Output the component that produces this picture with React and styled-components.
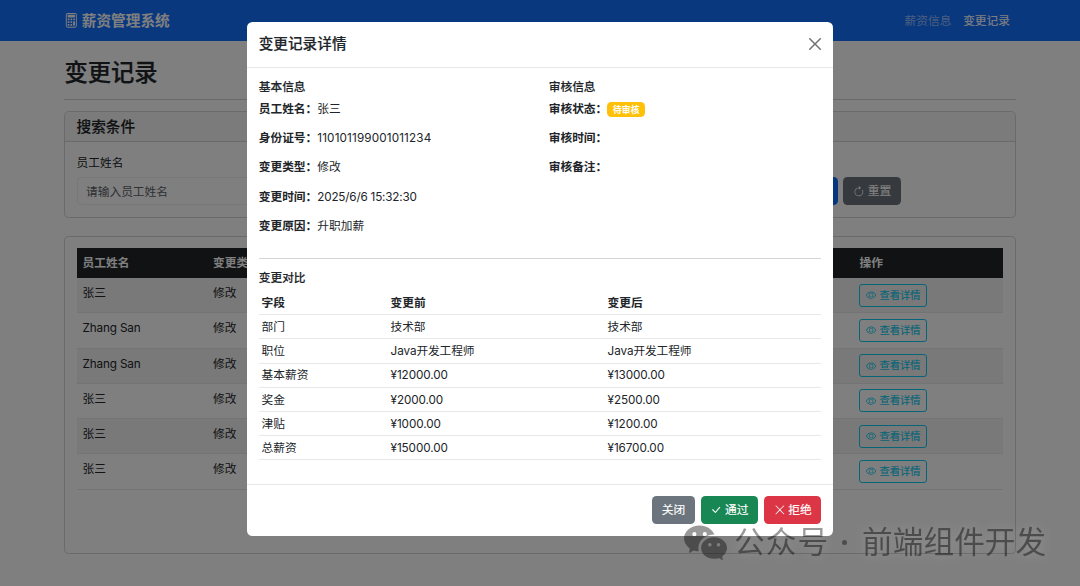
import React from "react";
import styled, { createGlobalStyle } from "styled-components";
import {
  BsArrowClockwise,
  BsCalculator,
  BsCheckLg,
  BsEye,
  BsWechat,
  BsXLg,
} from "react-icons/bs";

const records = [
  { name: "张三", type: "修改" },
  { name: "Zhang San", type: "修改" },
  { name: "Zhang San", type: "修改" },
  { name: "张三", type: "修改" },
  { name: "张三", type: "修改" },
  { name: "张三", type: "修改" },
];

const basicInfo = [
  { label: "员工姓名", value: "张三" },
  { label: "身份证号", value: "110101199001011234", tracking: "0.14px" },
  { label: "变更类型", value: "修改" },
  { label: "变更时间", value: "2025/6/6 15:32:30", tracking: "-0.2px" },
  { label: "变更原因", value: "升职加薪" },
];

const changes = [
  ["部门", "技术部", "技术部"],
  ["职位", "Java开发工程师", "Java开发工程师"],
  ["基本薪资", "¥12000.00", "¥13000.00"],
  ["奖金", "¥2000.00", "¥2500.00"],
  ["津贴", "¥1000.00", "¥1200.00"],
  ["总薪资", "¥15000.00", "¥16700.00"],
];

const App = () => {
  return (
    <>
      <GlobalStyle />
      <Page>
        <Navbar>
          <Brand>
            <BsCalculator />
            薪资管理系统
          </Brand>
          <NavLinks>
            <NavLink>薪资信息</NavLink>
            <NavLink $active>变更记录</NavLink>
          </NavLinks>
        </Navbar>

        <Container>
          <PageTitle>变更记录</PageTitle>
          <Card>
            <CardHeader>搜索条件</CardHeader>
            <SearchForm>
              <Field>
                <Label>员工姓名</Label>
                <TextInput placeholder="请输入员工姓名" />
              </Field>
              <SearchActions>
                <Button $color="#0d6efd">
                  <span>搜索</span>
                </Button>
                <Button $color="#6c757d">
                  <BsArrowClockwise />
                  <span>重置</span>
                </Button>
              </SearchActions>
            </SearchForm>
          </Card>

          <TableCard>
            <RecordTable>
              <thead>
                <tr>
                  <th>员工姓名</th>
                  <th>变更类型</th>
                  <th>操作</th>
                </tr>
              </thead>
              <tbody>
                {records.map((record, i) => (
                  <tr key={i}>
                    <td>{record.name}</td>
                    <td>{record.type}</td>
                    <td>
                      <DetailButton>
                        <BsEye />
                        查看详情
                      </DetailButton>
                    </td>
                  </tr>
                ))}
              </tbody>
            </RecordTable>
          </TableCard>
        </Container>
      </Page>

      <Backdrop>
        <Modal>
          <ModalHeader>
            <ModalTitle>变更记录详情</ModalTitle>
            <CloseButton aria-label="Close">
              <svg viewBox="0 0 16 16" fill="#000">
                <path d="M.293.293a1 1 0 0 1 1.414 0L8 6.586 14.293.293a1 1 0 1 1 1.414 1.414L9.414 8l6.293 6.293a1 1 0 0 1-1.414 1.414L8 9.414l-6.293 6.293a1 1 0 0 1-1.414-1.414L6.586 8 .293 1.707a1 1 0 0 1 0-1.414z" />
              </svg>
            </CloseButton>
          </ModalHeader>
          <ModalBody>
            <InfoGrid>
              <div>
                <SectionTitle>基本信息</SectionTitle>
                {basicInfo.map((item) => (
                  <InfoRow key={item.label}>
                    <strong>{item.label}：</strong>
                    <Value $tracking={item.tracking}>{item.value}</Value>
                  </InfoRow>
                ))}
              </div>
              <div>
                <SectionTitle>审核信息</SectionTitle>
                <InfoRow>
                  <strong>审核状态：</strong>
                  <Badge>待审核</Badge>
                </InfoRow>
                <InfoRow>
                  <strong>审核时间：</strong>
                </InfoRow>
                <InfoRow>
                  <strong>审核备注：</strong>
                </InfoRow>
              </div>
            </InfoGrid>
            <Divider />
            <SectionTitle>变更对比</SectionTitle>
            <CompareTable>
              <thead>
                <tr>
                  <th>字段</th>
                  <th>变更前</th>
                  <th>变更后</th>
                </tr>
              </thead>
              <tbody>
                {changes.map(([field, before, after]) => (
                  <tr key={field}>
                    <td>{field}</td>
                    <td>{before}</td>
                    <td>{after}</td>
                  </tr>
                ))}
              </tbody>
            </CompareTable>
          </ModalBody>
          <ModalFooter>
            <Button $color="#6c757d">
              <span>关闭</span>
            </Button>
            <Button $color="#198754">
              <BsCheckLg />
              <span>通过</span>
            </Button>
            <Button $color="#dc3545">
              <BsXLg />
              <span>拒绝</span>
            </Button>
          </ModalFooter>
        </Modal>
      </Backdrop>

      <Watermark>
        <BsWechat />
        <span>公众号</span>
        <Dot />
        <span>前端组件开发</span>
      </Watermark>
    </>
  );
};

const GlobalStyle = createGlobalStyle`
  * {
    box-sizing: border-box;
  }
  body {
    margin: 0;
    height: 586px;
    overflow: hidden;
    background: #fff;
    color: #212529;
    font-family: Inter, "Noto Sans CJK SC", sans-serif;
    font-size: 11.72px;
    line-height: 17.58px;
  }
  h2, h5, h6, p {
    margin: 0;
    font-weight: 500;
  }
  h2, h5, h6 {
    -webkit-text-stroke: 0.15px currentColor;
  }
  button, input {
    font-family: inherit;
  }
`;

const Page = styled.div`
  height: 586px;
  overflow: hidden;
`;

const Navbar = styled.nav`
  height: 41px;
  padding: 2px 70px 0 64.5px;
  display: flex;
  align-items: center;
  justify-content: space-between;
  background: #1470ff;
`;

const Brand = styled.div`
  display: flex;
  align-items: center;
  gap: 3.5px;
  color: #fff;
  font-size: 14.65px;
  font-weight: 600;

  svg {
    margin-left: -0.8px;
    margin-top: -2px;
  }
`;

const NavLinks = styled.div`
  display: flex;
  gap: 11.72px;
`;

const NavLink = styled.a`
  color: ${(props) => (props.$active ? "#fff" : "rgba(255, 255, 255, 0.55)")};
  -webkit-text-stroke: ${(props) => (props.$active ? "0.12px" : "0")} #fff;
`;

const Container = styled.main`
  padding: 17.6px 64.4px 0;
`;

const PageTitle = styled.h2`
  height: 41px;
  margin-bottom: 11.7px;
  border-bottom: 1px solid #d4d4d5;
  font-size: 23.3px;
  line-height: 28px;
  -webkit-text-stroke-width: 0.25px;
`;

const Card = styled.section`
  border: 1px solid #d5d5d5;
  border-radius: 4.4px;
`;

const CardHeader = styled.h5`
  height: 30px;
  padding: 7px 11.2px 0;
  background: #f7f7f7;
  border-bottom: 1px solid #d5d5d5;
  border-radius: 4px 4px 0 0;
  font-size: 14.65px;
`;

const SearchForm = styled.div`
  padding: 12.7px 11.2px 11.7px;
  display: flex;
  align-items: flex-end;
`;

const Field = styled.div`
  width: 231px;
  margin-right: 479.3px;
`;

const Label = styled.label`
  display: block;
  margin-bottom: 4.9px;
`;

const TextInput = styled.input`
  display: block;
  width: 100%;
  height: 28px;
  padding: 1px 8.4px 0;
  border: 1px solid #eceeef;
  border-radius: 4.4px;
  font-size: 11.72px;
  &::placeholder {
    color: #5c6166;
    opacity: 1;
  }
`;

const SearchActions = styled.div`
  display: flex;
  gap: 5.9px;
  margin-left: 8px;
`;

const Button = styled.button`
  height: 28px;
  padding: 0 9.6px;
  display: flex;
  align-items: center;
  gap: 3px;
  border: 0;
  border-radius: 4.4px;
  background: ${(props) => props.$color};
  color: #fff;
  font-size: 11.72px;
  line-height: 17.58px;

  span {
    padding-top: 1px;
    -webkit-text-stroke: 0.15px #fff;
  }
`;

const TableCard = styled(Card)`
  height: 317.5px;
  margin-top: 18px;
  padding: 11px 11.2px;
`;

const RecordTable = styled.table`
  width: 100%;
  table-layout: fixed;
  border-collapse: separate;
  border-spacing: 0;

  th, td {
    padding: 7px 6px 0;
    text-align: left;
    vertical-align: top;
  }
  th {
    height: 30px;
    background: #212529;
    color: #fff;
    font-weight: 700;
  }
  th:first-child {
    width: 130.4px;
  }
  th:last-child {
    width: 150px;
  }
  td {
    height: 35.25px;
    border-bottom: 1px solid #e6e8ea;
  }
  td:first-child {
    letter-spacing: -0.15px;
  }
  td:last-child {
    padding-top: 5.5px;
  }
  tbody tr:nth-child(odd) td {
    background: #f2f2f2;
  }
`;

const DetailButton = styled.button`
  height: 23px;
  padding: 0 5.8px;
  display: flex;
  align-items: center;
  gap: 3px;
  background: none;
  border: 1px solid #0dcaf0;
  border-radius: 3px;
  color: #0dcaf0;
  font-size: 10.25px;
  line-height: 15px;
  -webkit-text-stroke: 0.15px #0dcaf0;

  svg {
    stroke-width: 0;
  }
`;

const Backdrop = styled.div`
  position: fixed;
  inset: 0;
  padding-top: 21.5px;
  background: rgba(0, 0, 0, 0.5);
`;

const Modal = styled.div`
  width: 586px;
  height: 514px;
  margin: 0 auto;
  display: flex;
  flex-direction: column;
  background: #fff;
  border-radius: 5.5px;
`;

const ModalHeader = styled.header`
  height: 46px;
  padding: 0 11.7px;
  display: flex;
  align-items: center;
  justify-content: space-between;
  border-bottom: 1px solid #e6e8ea;
`;

const ModalTitle = styled.h5`
  font-size: 14.65px;
  line-height: 22px;
`;

const CloseButton = styled.button`
  padding: 0;
  border: 0;
  background: none;
  opacity: 0.55;

  svg {
    display: block;
    width: 12px;
    height: 12px;
  }
`;

const ModalBody = styled.div`
  flex: 1;
  padding: 12.7px 11.7px 0;
`;

const InfoGrid = styled.div`
  display: grid;
  grid-template-columns: 290px 1fr;
`;

const SectionTitle = styled.h6`
  margin-bottom: 6.4px;
  font-size: 11.72px;
  line-height: 14.06px;
`;

const InfoRow = styled.p`
  height: 17.58px;
  margin-bottom: 11.8px;
  display: flex;
  align-items: center;
  font-weight: 400;

  strong {
    font-weight: 700;
  }
`;

const Value = styled.span`
  letter-spacing: ${(props) => props.$tracking || "normal"};
`;

const Badge = styled.span`
  height: 15.5px;
  padding: 0 5.8px;
  display: flex;
  align-items: center;
  background: #ffc107;
  border-radius: 4.4px;
  color: #fff;
  font-size: 8.79px;
  font-weight: 700;
`;

const Divider = styled.div`
  height: 1px;
  margin: 10.6px 0 11.4px;
  background: #d3d4d5;
`;

const CompareTable = styled.table`
  width: 100%;
  table-layout: fixed;
  border-collapse: separate;
  border-spacing: 0;

  th, td {
    height: 24.2px;
    padding: 3.9px 2.9px 1.7px;
    border-bottom: 1px solid #e6e8ea;
    text-align: left;
  }
  th {
    font-weight: 700;
  }
  th:first-child {
    width: 129px;
  }
  th:nth-child(2) {
    width: 217px;
  }
  td:not(:first-child) {
    letter-spacing: -0.1px;
  }
`;

const ModalFooter = styled.footer`
  height: 52px;
  padding: 0 11.7px;
  display: flex;
  align-items: center;
  justify-content: flex-end;
  gap: 5.9px;
  border-top: 1px solid #e6e8ea;
`;

const Watermark = styled.div`
  position: fixed;
  left: 684px;
  top: 519px;
  height: 46px;
  display: flex;
  align-items: center;
  color: #000;
  opacity: 0.4;
  font-size: 30.7px;
  font-weight: 400;
  line-height: 46px;
  white-space: nowrap;
  text-shadow: 0 0 12px rgba(255, 255, 255, 0.5);

  svg {
    width: 43px;
    height: 43px;
    margin: -2px 7px 0 0;
  }
  span:first-of-type {
    letter-spacing: 1px;
  }
`;

const Dot = styled.i`
  width: 5px;
  height: 5px;
  margin: 0 15px 0 13px;
  border-radius: 50%;
  background: #000;
`;

export default App;
